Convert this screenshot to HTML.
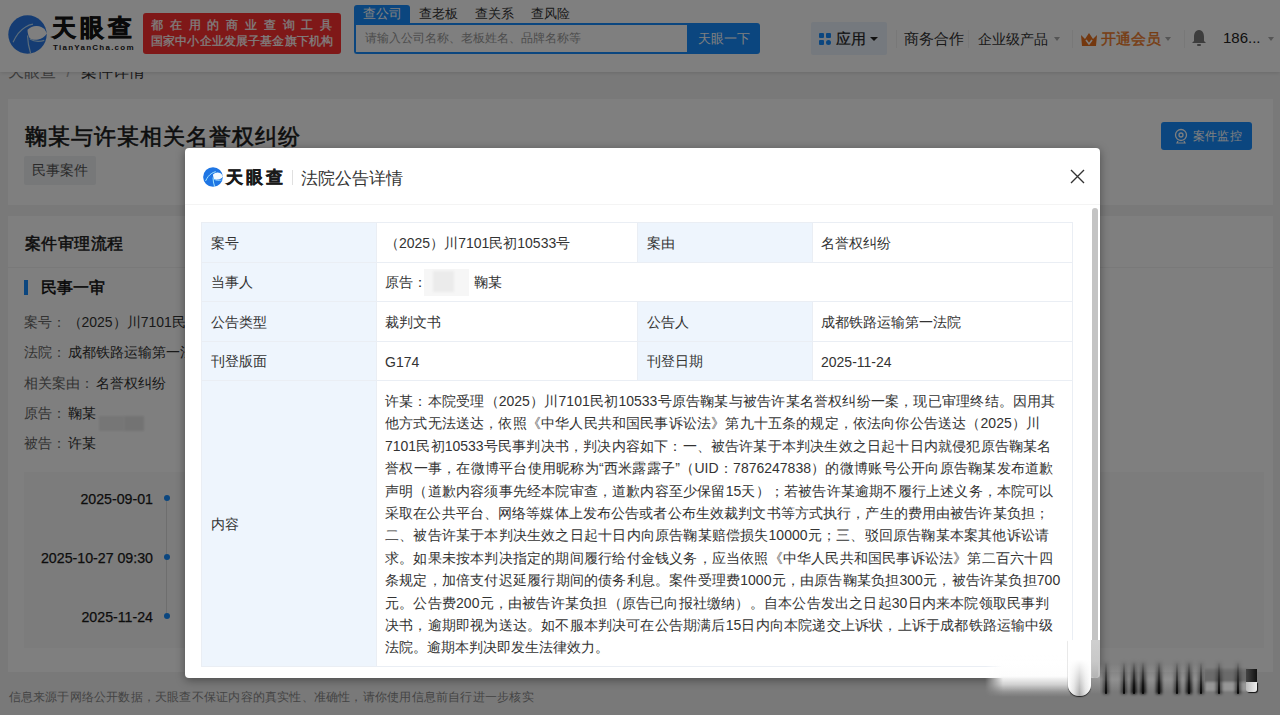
<!DOCTYPE html>
<html><head><meta charset="utf-8">
<style>
*{margin:0;padding:0;box-sizing:border-box}
html,body{width:1280px;height:715px;overflow:hidden}
body{font-family:"Liberation Sans",sans-serif;background:#f3f3f3;position:relative;color:#333}
.abs{position:absolute}
#hdr{left:0;top:0;width:1280px;height:72px;background:#fff;box-shadow:0 1px 4px rgba(0,0,0,.12);z-index:5}
.card{background:#fff;position:absolute}
#ov{position:absolute;left:0;top:0;width:1280px;height:715px;background:rgba(0,0,0,.5);z-index:50}
#modal{position:absolute;left:185px;top:148px;width:915px;height:530px;background:#fff;border-radius:4px;z-index:60;overflow:hidden;box-shadow:0 2px 10px rgba(0,0,0,.4)}
.nw{white-space:nowrap}
.j{text-align:justify;text-align-last:justify;white-space:nowrap}
span.j{display:inline-block}
.ln{text-align:justify;text-align-last:justify;white-space:nowrap;height:22.4px}
.ln0{white-space:nowrap;height:22.4px}
.row{left:16px;font-size:14px;line-height:20px;color:#333}
.row .k{color:#666;margin-right:1.5px}
.date{right:1120px;font-size:14.2px;line-height:20px;color:#1a1a1a;text-align:right;-webkit-text-stroke:0.25px #1a1a1a}
.dot{left:155.5px;width:6px;height:6px;border-radius:50%;background:#168dff}

.lb,.lb2,.vl,.vl2{position:absolute;font-size:14px;color:#333;display:flex;align-items:center;white-space:nowrap;padding-top:2px}
.lb{left:0;width:174px;background:#eef5fd;padding-left:9px}
.vl{left:174px;width:261px;padding-left:8px;border-left:1px solid #eaeef4}
.lb2{left:435px;width:175px;background:#eef5fd;padding-left:9px;border-left:1px solid #eaeef4}
.vl2{left:610px;width:260px;padding-left:8px;border-left:1px solid #eaeef4}
.hl{position:absolute;left:0;width:870px;height:1px;background:#eaeef4}

</style></head><body>

<div id="hdr" class="abs">
  <svg class="abs" style="left:8px;top:15px" width="39" height="39" viewBox="0 0 20 20"><circle cx="10" cy="10" r="9.85" fill="#2a78e6"/><path d="M10 7.6 C11.3 6.2 13 5.5 14.8 5.6 C16.5 5.7 17.8 6.3 18.7 7.2 L20 9.5 C18.8 11.2 17.3 12.2 15.5 12.5 C13.8 12.8 12.3 12.6 11.2 12 C10.4 10.8 10 9.2 10 7.6 Z" fill="#ffffff"/><path d="M2.6 14 C4 10.8 6 8 8.8 6.3 C10.2 5.4 11.5 4.9 12.8 4.7" stroke="#b5d8f5" stroke-width="0.6" fill="none"/><path d="M11.6 19.6 C10.6 16.5 10.1 13.5 10 10.5" stroke="#b5d8f5" stroke-width="0.6" fill="none"/><path d="M11.2 12.3 C13.3 13.6 15.8 13.9 18.6 13" stroke="#b5d8f5" stroke-width="0.7" fill="none"/></svg>
  <div class="abs nw j" style="width:84.00px;left:52px;top:13px;font-size:24px;font-weight:bold;-webkit-text-stroke:0.7px #151515;color:#151515;line-height:30px;letter-spacing:4px">天眼查</div>
  <div class="abs nw" style="left:53px;top:43px;font-size:8px;font-weight:bold;color:#222;line-height:10px;letter-spacing:1.25px">TianYanCha.com</div>
  <div class="abs" style="left:143px;top:13px;width:198px;height:41px;background:#ff3030;border-radius:3px;color:#fff;-webkit-text-stroke:0.25px #fff;font-size:12px;line-height:17px;padding:4px 0 0 8px">
    <div class="nw j" style="width:188.00px;letter-spacing:6.8px;line-height:16px">都在用的商业查询工具</div>
    <div class="nw j" style="width:182.25px;letter-spacing:0.15px">国家中小企业发展子基金旗下机构</div>
  </div>
  <div class="abs nw" style="left:354px;top:5px;width:56px;height:19px;background:#168dff;border-radius:3px 3px 0 0;color:#fff;font-size:12.6px;line-height:19px;text-align:center"><span class="j" style="width:39.00px;">查公司</span></div>
  <div class="abs nw" style="left:410px;top:5px;width:56px;height:19px;color:#333;font-size:12.6px;line-height:19px;text-align:center"><span class="j" style="width:39.00px;">查老板</span></div>
  <div class="abs nw" style="left:466px;top:5px;width:56px;height:19px;color:#333;font-size:12.6px;line-height:19px;text-align:center"><span class="j" style="width:39.00px;">查关系</span></div>
  <div class="abs nw" style="left:522px;top:5px;width:56px;height:19px;color:#333;font-size:12.6px;line-height:19px;text-align:center"><span class="j" style="width:39.00px;">查风险</span></div>
  <div class="abs nw" style="left:354px;top:23px;width:334px;height:31px;border:2px solid #168dff;border-right:none;border-radius:0 0 0 3px;color:#999;font-size:12.2px;line-height:27px;padding-left:8.5px"><span class="j" style="width:216.00px;">请输入公司名称、老板姓名、品牌名称等</span></div>
  <div class="abs nw" style="left:687px;top:23px;width:73px;height:31px;background:#168dff;border-radius:0 3px 3px 0;color:#fff;font-size:13px;line-height:31px;text-align:center"><span class="j" style="width:52.00px;">天眼一下</span></div>
  <div class="abs" style="left:811px;top:22px;width:76px;height:33px;background:#eaf2fd;border-radius:2px"></div>
  <div class="abs" style="left:819px;top:33px;width:5px;height:5px;background:#168dff;border-radius:1px"></div>
  <div class="abs" style="left:826px;top:33px;width:5px;height:5px;background:#168dff;border-radius:1px"></div>
  <div class="abs" style="left:819px;top:40px;width:5px;height:5px;background:#168dff;border-radius:1px"></div>
  <div class="abs" style="left:826px;top:40px;width:5px;height:5px;background:#168dff;border-radius:3px"></div>
  <div class="abs nw j" style="width:30.00px;left:836px;top:28.5px;font-size:14.5px;line-height:20px;color:#222;-webkit-text-stroke:0.2px #222">应用</div>
  <div class="abs" style="left:869.5px;top:37px;width:0;height:0;border-left:4px solid transparent;border-right:4px solid transparent;border-top:4.5px solid #222"></div>
  <div class="abs" style="left:896px;top:30px;width:1px;height:18px;background:#f0f0f0"></div>
  <div class="abs nw j" style="width:60.00px;left:903.5px;top:28.5px;font-size:14.5px;line-height:20px;color:#333">商务合作</div>
  <div class="abs" style="left:968px;top:30px;width:1px;height:18px;background:#f0f0f0"></div>
  <div class="abs nw j" style="width:70.00px;left:978px;top:28.5px;font-size:14.2px;line-height:20px;color:#333">企业级产品</div>
  <div class="abs" style="left:1054px;top:37px;width:0;height:0;border-left:3.5px solid transparent;border-right:3.5px solid transparent;border-top:4px solid #aaa"></div>
  <div class="abs" style="left:1072px;top:30px;width:1px;height:18px;background:#f0f0f0"></div>
  <svg class="abs" style="left:1080px;top:32px" width="18" height="15" viewBox="0 0 18 15"><path d="M1 3 L5 7 L9 1 L13 7 L17 3 L16 14 L2 14 Z" fill="#e8701f"/><path d="M6 8 L9 12 L12 8" stroke="#fff" stroke-width="1.6" fill="none"/></svg>
  <div class="abs nw j" style="width:60.00px;left:1101px;top:28.5px;font-size:14.5px;line-height:20px;color:#f07a26;-webkit-text-stroke:0.4px #f07a26">开通会员</div>
  <div class="abs" style="left:1165px;top:37px;width:0;height:0;border-left:3.5px solid transparent;border-right:3.5px solid transparent;border-top:4px solid #aaa"></div>
  <div class="abs" style="left:1184px;top:30px;width:1px;height:18px;background:#f0f0f0"></div>
  <svg class="abs" style="left:1191px;top:29px" width="16" height="18" viewBox="0 0 16 18"><path d="M8 1 C4 1 3 5 3 8 L3 12 L1 14 L15 14 L13 12 L13 8 C13 5 12 1 8 1 Z" fill="#7a7a7a"/><rect x="6" y="15" width="4" height="2" rx="1" fill="#7a7a7a"/></svg>
  <div class="abs nw" style="left:1223px;top:28px;font-size:15px;line-height:20px;color:#222">186...</div>
  <div class="abs" style="left:1268px;top:37px;width:0;height:0;border-left:3.5px solid transparent;border-right:3.5px solid transparent;border-top:4px solid #aaa"></div>
</div>

<div class="abs nw j" style="width:137.36px;left:8px;top:61px;font-size:16px;line-height:22px;color:#777">天眼查 <span style="color:#aaa;margin:0 6px">/</span> <span style="color:#333">案件详情</span></div>

<div class="card" style="left:8px;top:99px;width:1265px;height:106px">
  <div class="abs nw j" style="width:276.61px;left:16.5px;top:22.5px;font-size:21.5px;letter-spacing:1.05px;line-height:30px;font-weight:normal;-webkit-text-stroke:0.6px #1a1a1a;color:#1a1a1a">鞠某与许某相关名誉权纠纷</div>
  <div class="abs nw" style="left:16px;top:57px;width:72px;height:29px;background:#eef0f3;border-radius:2px;font-size:14px;line-height:29px;text-align:center;color:#555"><span class="j" style="width:56.00px;">民事案件</span></div>
  <div class="abs nw" style="left:1153px;top:23px;width:91px;height:28px;background:#168dff;border-radius:3px;color:#fff;font-size:12.1px;line-height:28px;padding-left:32px"><span class="j" style="width:48.5px;">案件监控</span></div>
  <svg class="abs" style="left:1165px;top:29px" width="16" height="16" viewBox="0 0 16 16"><circle cx="8" cy="7" r="5.5" stroke="#fff" stroke-width="1.3" fill="none"/><circle cx="8" cy="7" r="2" stroke="#fff" stroke-width="1.3" fill="none"/><path d="M5 13 L4 15 L12 15 L11 13" stroke="#fff" stroke-width="1.2" fill="none"/></svg>
</div>

<div class="card" style="left:8px;top:216px;width:1265px;height:456px">
  <div class="abs nw j" style="width:99.61px;left:16.5px;top:16.5px;font-size:16px;letter-spacing:0.6px;line-height:22px;font-weight:normal;-webkit-text-stroke:0.5px #1a1a1a;color:#1a1a1a">案件审理流程</div>
  <div class="abs" style="left:0;top:51px;width:1269px;height:1px;background:#f2f2f2"></div>
  <div class="abs" style="left:16px;top:64px;width:4px;height:15px;background:#168dff"></div>
  <div class="abs nw j" style="width:64.00px;left:33px;top:61px;font-size:16px;line-height:22px;font-weight:normal;-webkit-text-stroke:0.5px #111;color:#111">民事一审</div>
  <div class="abs nw row j" style="width:228.73px;top:96px"><span class="k">案号：</span>（2025）川7101民初10533号</div>
  <div class="abs nw row j" style="width:183.50px;top:126px"><span class="k">法院：</span>成都铁路运输第一法院</div>
  <div class="abs nw row j" style="width:141.50px;top:157px"><span class="k">相关案由：</span>名誉权纠纷</div>
  <div class="abs nw row j" style="width:71.50px;top:187px"><span class="k">原告：</span>鞠某</div>
  <div class="abs" style="left:91px;top:200px;width:25px;height:15px;background:#ececec;filter:blur(1px)"></div>
  <div class="abs" style="left:116px;top:200px;width:20px;height:15px;background:#e6e6e6;filter:blur(1px)"></div>
  <div class="abs nw row j" style="width:71.50px;top:217px"><span class="k">被告：</span>许某</div>
  <div class="abs" style="left:16px;top:256px;width:1240px;height:176px;background:#f9f9f9"></div>
  <div class="abs nw date" style="top:273px">2025-09-01</div>
  <div class="abs nw date" style="top:332px">2025-10-27 09:30</div>
  <div class="abs nw date" style="top:391px">2025-11-24</div>
  <div class="abs" style="left:158px;top:282px;width:1px;height:118px;background:#ddd"></div>
  <div class="abs dot" style="top:279px"></div>
  <div class="abs dot" style="top:338px"></div>
  <div class="abs dot" style="top:397px"></div>
</div>

<div class="abs nw" style="left:8.5px;top:688px;width:525px;text-align:justify;text-align-last:justify;font-size:12px;line-height:18px;color:#888">信息来源于网络公开数据，天眼查不保证内容的真实性、准确性，请你使用信息前自行进一步核实</div>

<div id="ov"></div>

<div id="modal">
  <svg class="abs" style="left:18px;top:19px" width="20" height="20" viewBox="0 0 20 20"><circle cx="10" cy="10" r="9.85" fill="#1f76e4"/><path d="M10 7.6 C11.3 6.2 13 5.5 14.8 5.6 C16.5 5.7 17.8 6.3 18.7 7.2 L20 9.5 C18.8 11.2 17.3 12.2 15.5 12.5 C13.8 12.8 12.3 12.6 11.2 12 C10.4 10.8 10 9.2 10 7.6 Z" fill="#f2faff"/><path d="M2.6 14 C4 10.8 6 8 8.8 6.3 C10.2 5.4 11.5 4.9 12.8 4.7" stroke="#9fe4ff" stroke-width="1" fill="none"/><path d="M11.6 19.6 C10.6 16.5 10.1 13.5 10 10.5" stroke="#9fe4ff" stroke-width="1" fill="none"/><path d="M11.2 12.3 C13.3 13.6 15.8 13.9 18.6 13" stroke="#9fe4ff" stroke-width="0.7" fill="none"/></svg>
  <div class="abs nw j" style="width:59px;left:41px;top:18px;font-size:16.5px;font-weight:bold;-webkit-text-stroke:0.5px #1a1a1a;color:#1a1a1a;letter-spacing:3px;line-height:22px">天眼查</div>
  <div class="abs" style="left:107px;top:22px;width:1px;height:15px;background:#e0e0e0"></div>
  <div class="abs nw j" style="width:102.00px;left:116px;top:18px;font-size:16.5px;color:#333;line-height:24px">法院公告详情</div>
  <svg class="abs" style="left:885px;top:21px" width="15" height="15" viewBox="0 0 15 15"><path d="M1 1L14 14M14 1L1 14" stroke="#333" stroke-width="1.35"/></svg>
  <div class="abs" style="left:0;top:56px;width:915px;height:1px;background:#f4f4f4"></div>
  <div class="abs" style="left:907px;top:60px;width:6px;height:470px;background:#c4c4c4;border-radius:3px"></div>
  <div id="tbl" class="abs" style="left:16px;top:74px;width:872px;height:445px;border:1px solid #eaeef4">
    <div class="lb" style="top:0;height:39px"><span class="j" style="width:28.00px;">案号</span></div>
    <div class="vl" style="top:0;height:39px"><span class="j" style="width:185.23px;">（2025）川7101民初10533号</span></div>
    <div class="lb2" style="top:0;height:39px"><span class="j" style="width:28.00px;">案由</span></div>
    <div class="vl2" style="top:0;height:39px"><span class="j" style="width:70.00px;">名誉权纠纷</span></div>
    <div class="hl" style="top:39px"></div>
    <div class="lb" style="top:40px;height:38px"><span class="j" style="width:42.00px;">当事人</span></div>
    <div class="vl" style="top:40px;height:38px;width:696px">原告：<span style="display:inline-block;width:45px;height:27px;background:#f6f6f6;vertical-align:middle;margin:0 5px 0 -3px;position:relative;top:-1px"><span style="position:absolute;left:9px;top:2px;width:21px;height:21px;background:#ebebeb;filter:blur(1.2px)"></span></span> 鞠某</div>
    <div class="hl" style="top:78px"></div>
    <div class="lb" style="top:79px;height:39px"><span class="j" style="width:56.00px;">公告类型</span></div>
    <div class="vl" style="top:79px;height:39px"><span class="j" style="width:56.00px;">裁判文书</span></div>
    <div class="lb2" style="top:79px;height:39px"><span class="j" style="width:42.00px;">公告人</span></div>
    <div class="vl2" style="top:79px;height:39px"><span class="j" style="width:140.00px;">成都铁路运输第一法院</span></div>
    <div class="hl" style="top:118px"></div>
    <div class="lb" style="top:119px;height:38px"><span class="j" style="width:56.00px;">刊登版面</span></div>
    <div class="vl" style="top:119px;height:38px"><span class="j" style="width:34.25px;">G174</span></div>
    <div class="lb2" style="top:119px;height:38px"><span class="j" style="width:56.00px;">刊登日期</span></div>
    <div class="vl2" style="top:119px;height:38px"><span class="j" style="width:70.58px;">2025-11-24</span></div>
    <div class="hl" style="top:157px"></div>
    <div class="lb" style="top:158px;height:285px"><span class="j" style="width:28.00px;">内容</span></div>
    <div class="vl" style="top:158px;height:285px;width:696px;line-height:22.4px;padding-top:9px;display:block;padding-left:8px"><div class="ln" style="width:670.5px">许某：本院受理（2025）川7101民初10533号原告鞠某与被告许某名誉权纠纷一案，现已审理终结。因用其</div><div class="ln" style="width:655.1px">他方式无法送达，依照《中华人民共和国民事诉讼法》第九十五条的规定，依法向你公告送达（2025）川</div><div class="ln" style="width:666.3px">7101民初10533号民事判决书，判决内容如下：一、被告许某于本判决生效之日起十日内就侵犯原告鞠某名</div><div class="ln" style="width:668.5px">誉权一事，在微博平台使用昵称为“西米露露子”（UID：7876247838）的微博账号公开向原告鞠某发布道歉</div><div class="ln" style="width:668.5px">声明（道歉内容须事先经本院审查，道歉内容至少保留15天）；若被告许某逾期不履行上述义务，本院可以</div><div class="ln" style="width:664.0px">采取在公共平台、网络等媒体上发布公告或者公布生效裁判文书等方式执行，产生的费用由被告许某负担；</div><div class="ln" style="width:664.0px">二、被告许某于本判决生效之日起十日内向原告鞠某赔偿损失10000元；三、驳回原告鞠某本案其他诉讼请</div><div class="ln" style="width:667.5px">求。如果未按本判决指定的期间履行给付金钱义务，应当依照《中华人民共和国民事诉讼法》第二百六十四</div><div class="ln" style="width:675.2px">条规定，加倍支付迟延履行期间的债务利息。案件受理费1000元，由原告鞠某负担300元，被告许某负担700</div><div class="ln" style="width:664.5px">元。公告费200元，由被告许某负担（原告已向报社缴纳）。自本公告发出之日起30日内来本院领取民事判</div><div class="ln" style="width:668.5px">决书，逾期即视为送达。如不服本判决可在公告期满后15日内向本院递交上诉状，上诉于成都铁路运输中级</div><div class="ln0">法院。逾期本判决即发生法律效力。</div></div>
  </div>
</div>

<div class="abs" style="left:985px;top:655px;width:85px;height:42px;z-index:70;-webkit-mask-image:linear-gradient(to right,transparent,#000 18px);background:linear-gradient(to bottom,rgba(255,255,255,0) 0%,#fff 18%,#fdfdfd 50%,rgba(215,215,215,.95) 70%,rgba(150,150,150,.85) 88%,rgba(128,128,128,0) 100%)"></div>
<div class="abs" style="left:1068px;top:640px;width:23px;height:56px;z-index:70;border-radius:0 0 11px 11px;background:linear-gradient(to bottom,#fff 0%,#fff 35%,rgba(255,255,255,0) 100%),linear-gradient(to right,#fff 0%,#e0e0e0 25%,#aaa 50%,#e0e0e0 75%,#fff 100%);box-shadow:0 1px 1px #222"></div>
<div class="abs" style="left:1091px;top:640px;width:9px;height:54px;z-index:70;background:linear-gradient(to bottom,#cfcfcf 0%,#c8c8c8 40%,rgba(150,150,150,.6) 85%,rgba(128,128,128,0))"></div>
<div class="abs" style="left:1100px;top:664px;width:105px;height:28px;z-index:70;background:linear-gradient(to bottom,rgba(160,160,160,0),rgba(160,160,160,.6) 55%,rgba(150,150,150,0))"></div>
<div class="abs" style="left:1205px;top:669px;width:44px;height:13px;z-index:70;background:rgba(95,95,95,.55);filter:blur(1px)"></div>
<div class="abs" style="left:1205px;top:682px;width:44px;height:9px;z-index:70;background:rgba(170,170,170,.6);filter:blur(1px)"></div>
<div class="abs" style="left:1246px;top:669px;width:11px;height:13px;z-index:71;background:linear-gradient(to right,#444,#111);filter:blur(0.5px)"></div>
<div class="abs" style="left:1246px;top:682px;width:11px;height:10px;z-index:71;background:linear-gradient(to right,#bbb,#eee);border-radius:0 0 3px 3px;box-shadow:1px 1px 1px #111;filter:blur(0.4px)"></div>
<div class="abs" style="left:1102.5px;top:660px;width:6.0px;height:34px;z-index:71;filter:blur(1.5px);background:linear-gradient(to bottom,rgba(0,0,0,0),rgba(0,0,0,0.45) 70%,rgba(0,0,0,0.56))"></div>
<div class="abs" style="left:1104.5px;top:662px;width:2px;height:32px;z-index:72;border-radius:1px;background:linear-gradient(to bottom,rgba(20,20,20,0),rgba(20,20,20,.55) 55%,rgba(10,10,10,.95) 92%,#000)"></div>
<div class="abs" style="left:1120.8px;top:660px;width:6.0px;height:34px;z-index:71;filter:blur(1.5px);background:linear-gradient(to bottom,rgba(0,0,0,0),rgba(0,0,0,0.45) 70%,rgba(0,0,0,0.56))"></div>
<div class="abs" style="left:1122.8px;top:662px;width:2px;height:32px;z-index:72;border-radius:1px;background:linear-gradient(to bottom,rgba(20,20,20,0),rgba(20,20,20,.55) 55%,rgba(10,10,10,.95) 92%,#000)"></div>
<div class="abs" style="left:1131.3px;top:660px;width:6.0px;height:34px;z-index:71;filter:blur(1.5px);background:linear-gradient(to bottom,rgba(0,0,0,0),rgba(0,0,0,0.68) 70%,rgba(0,0,0,0.83))"></div>
<div class="abs" style="left:1133.3px;top:662px;width:2px;height:32px;z-index:72;border-radius:1px;background:linear-gradient(to bottom,rgba(20,20,20,0),rgba(20,20,20,.55) 55%,rgba(10,10,10,.95) 92%,#000)"></div>
<div class="abs" style="left:1140.4px;top:660px;width:6.0px;height:34px;z-index:71;filter:blur(1.5px);background:linear-gradient(to bottom,rgba(0,0,0,0),rgba(0,0,0,0.68) 70%,rgba(0,0,0,0.83))"></div>
<div class="abs" style="left:1142.4px;top:662px;width:2px;height:32px;z-index:72;border-radius:1px;background:linear-gradient(to bottom,rgba(20,20,20,0),rgba(20,20,20,.55) 55%,rgba(10,10,10,.95) 92%,#000)"></div>
<div class="abs" style="left:1155.9px;top:660px;width:6.0px;height:34px;z-index:71;filter:blur(1.5px);background:linear-gradient(to bottom,rgba(0,0,0,0),rgba(0,0,0,0.68) 70%,rgba(0,0,0,0.83))"></div>
<div class="abs" style="left:1157.9px;top:662px;width:2px;height:32px;z-index:72;border-radius:1px;background:linear-gradient(to bottom,rgba(20,20,20,0),rgba(20,20,20,.55) 55%,rgba(10,10,10,.95) 92%,#000)"></div>
<div class="abs" style="left:1173.5px;top:660px;width:6.0px;height:34px;z-index:71;filter:blur(1.5px);background:linear-gradient(to bottom,rgba(0,0,0,0),rgba(0,0,0,0.45) 70%,rgba(0,0,0,0.56))"></div>
<div class="abs" style="left:1175.5px;top:662px;width:2px;height:32px;z-index:72;border-radius:1px;background:linear-gradient(to bottom,rgba(20,20,20,0),rgba(20,20,20,.55) 55%,rgba(10,10,10,.95) 92%,#000)"></div>
<div class="abs" style="left:1185.5px;top:660px;width:6.0px;height:34px;z-index:71;filter:blur(1.5px);background:linear-gradient(to bottom,rgba(0,0,0,0),rgba(0,0,0,0.68) 70%,rgba(0,0,0,0.83))"></div>
<div class="abs" style="left:1187.5px;top:662px;width:2px;height:32px;z-index:72;border-radius:1px;background:linear-gradient(to bottom,rgba(20,20,20,0),rgba(20,20,20,.55) 55%,rgba(10,10,10,.95) 92%,#000)"></div>
<div class="abs" style="left:1198.0px;top:660px;width:6.0px;height:34px;z-index:71;filter:blur(1.5px);background:linear-gradient(to bottom,rgba(0,0,0,0),rgba(0,0,0,0.45) 70%,rgba(0,0,0,0.56))"></div>
<div class="abs" style="left:1200.0px;top:662px;width:2px;height:32px;z-index:72;border-radius:1px;background:linear-gradient(to bottom,rgba(20,20,20,0),rgba(20,20,20,.55) 55%,rgba(10,10,10,.95) 92%,#000)"></div>
<div class="abs" style="left:1215.7px;top:660px;width:6.0px;height:34px;z-index:71;filter:blur(1.5px);background:linear-gradient(to bottom,rgba(0,0,0,0),rgba(0,0,0,0.45) 70%,rgba(0,0,0,0.56))"></div>
<div class="abs" style="left:1217.7px;top:662px;width:2px;height:32px;z-index:72;border-radius:1px;background:linear-gradient(to bottom,rgba(20,20,20,0),rgba(20,20,20,.55) 55%,rgba(10,10,10,.95) 92%,#000)"></div>
<div class="abs" style="left:1235.4px;top:660px;width:6.0px;height:34px;z-index:71;filter:blur(1.5px);background:linear-gradient(to bottom,rgba(0,0,0,0),rgba(0,0,0,0.45) 70%,rgba(0,0,0,0.56))"></div>
<div class="abs" style="left:1237.4px;top:662px;width:2px;height:32px;z-index:72;border-radius:1px;background:linear-gradient(to bottom,rgba(20,20,20,0),rgba(20,20,20,.55) 55%,rgba(10,10,10,.95) 92%,#000)"></div>
</body></html>
